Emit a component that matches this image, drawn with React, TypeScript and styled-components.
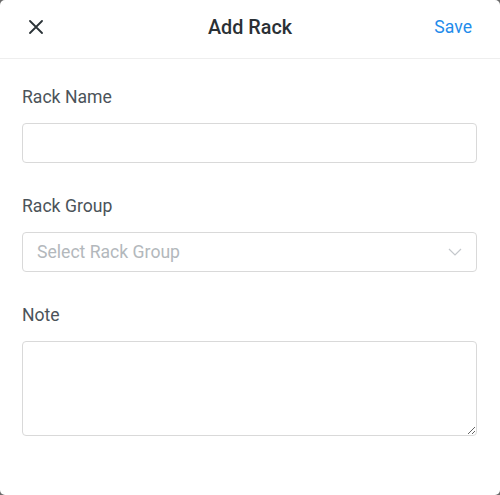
import React from "react";
import styled, { createGlobalStyle } from "styled-components";

const GlobalStyle = createGlobalStyle`
  html, body {
    margin: 0;
    padding: 0;
    background: #6b6b6b;
  }
  * { box-sizing: border-box; }
`;

const Modal = styled.div`
  width: 500px;
  height: 495px;
  background: #ffffff;
  border-radius: 5px;
  font-family: Roboto, "Liberation Sans", sans-serif;
  display: flex;
  flex-direction: column;
  overflow: hidden;
`;

const Header = styled.div`
  height: 59px;
  display: grid;
  grid-template-columns: 1fr auto 1fr;
  align-items: center;
  padding: 0 28px 4px 28px;
  border-bottom: 1px solid #eeeeee;
`;

const CloseButton = styled.button`
  justify-self: start;
  border: none;
  background: none;
  padding: 0;
  width: 16px;
  height: 16px;
  display: flex;
  align-items: center;
  justify-content: center;
  color: #2b3338;
  cursor: pointer;
`;

const Title = styled.h1`
  margin: 0;
  font-size: 19.8px;
  font-weight: 500;
  color: #2a3035;
`;

const SaveButton = styled.button`
  justify-self: end;
  border: none;
  background: none;
  padding: 0;
  font-family: inherit;
  font-size: 17.6px;
  color: #1f8ceb;
  cursor: pointer;
`;

const Form = styled.form`
  display: flex;
  flex-direction: column;
  gap: 33px;
  padding: 28px 23px 0 22px;
`;

const Field = styled.div`
  display: flex;
  flex-direction: column;
  gap: 16px;
`;

const Label = styled.label`
  font-size: 17.6px;
  line-height: 20px;
  color: #4b5359;
`;

const TextInput = styled.input`
  height: 40px;
  width: 100%;
  border: 1px solid #d9d9d9;
  border-radius: 4px;
  padding: 0 14px;
  font-family: inherit;
  font-size: 17.6px;
  outline: none;
`;

const SelectBox = styled.div`
  height: 40px;
  width: 100%;
  border: 1px solid #d9d9d9;
  border-radius: 4px;
  padding: 0 14px 0 14px;
  display: flex;
  align-items: center;
  justify-content: space-between;
`;

const Placeholder = styled.span`
  font-size: 17.6px;
  color: #b3b8bc;
`;

const NoteArea = styled.textarea`
  height: 95px;
  width: 100%;
  border: 1px solid #d9d9d9;
  border-radius: 4px;
  padding: 10px 14px;
  font-family: inherit;
  font-size: 17.6px;
  resize: vertical;
  outline: none;
`;

export default function App() {
  return (
    <>
      <GlobalStyle />
      <Modal>
        <Header>
          <CloseButton aria-label="Close">
            <svg width="14" height="14" viewBox="0 0 14 14">
              <path d="M1 1 L13 13 M13 1 L1 13" stroke="currentColor" strokeWidth="1.8" strokeLinecap="round" />
            </svg>
          </CloseButton>
          <Title>Add Rack</Title>
          <SaveButton>Save</SaveButton>
        </Header>
        <Form>
          <Field>
            <Label>Rack Name</Label>
            <TextInput />
          </Field>
          <Field>
            <Label>Rack Group</Label>
            <SelectBox>
              <Placeholder>Select Rack Group</Placeholder>
              <svg width="14" height="8" viewBox="0 0 14 8">
                <path d="M1 1 L7 7 L13 1" fill="none" stroke="#c4c8cc" strokeWidth="1.2" />
              </svg>
            </SelectBox>
          </Field>
          <Field>
            <Label>Note</Label>
            <NoteArea />
          </Field>
        </Form>
      </Modal>
    </>
  );
}
